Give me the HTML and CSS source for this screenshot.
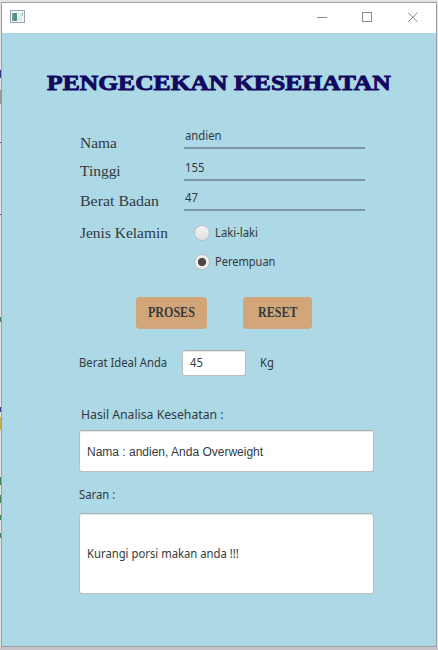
FILE: index.html
```html
<!DOCTYPE html>
<html lang="id">
<head>
<meta charset="utf-8">
<title>Pengecekan Kesehatan</title>
<link rel="stylesheet" href="styles.css">
</head>
<body>
<div class="backdrop">
  <i class="mark navy m1"></i><i class="mark gray m2"></i><i class="mark navy m3"></i><i class="mark navy m4"></i><i class="mark green m5"></i><i class="mark navy m6"></i><i class="mark gold m7"></i><i class="mark green m8"></i><i class="mark green m9"></i><i class="mark green m10"></i><i class="mark green m11"></i>
</div>
<div class="window">
  <header class="titlebar">
    <svg class="app-icon" width="15" height="13" viewBox="0 0 15 13">
      <rect x=".5" y=".5" width="14" height="12" fill="#f4f8f8" stroke="#9aa5ab"/>
      <rect x="2" y="3" width="5" height="8" fill="#4f9185"/>
      <rect x="2" y="3" width="2" height="8" fill="#6f96a5"/>
      <rect x="8" y="3" width="4" height="8" fill="#dfe9e9"/>
      <path d="M12.500 2v4" stroke="#9bb2ae"/>
    </svg>
    <svg class="controls" width="101" height="11" viewBox="0 0 101 11" fill="none" stroke="#8a8a8a">
      <path d="M0 5.500h10"/>
      <rect x="45.500" y=".5" width="9" height="9"/>
      <path d="M91 .5l9.500 9.500M100.500 .5L91 10"/>
    </svg>
  </header>
  <main class="client">
    <h1 class="title"><span>PENGECEKAN KESEHATAN</span></h1>
    <section class="form">
      <div class="row"><label class="name n1">Nama</label><div class="line-input"><span>andien</span></div></div>
      <div class="row r2"><label class="name n2">Tinggi</label><div class="line-input"><span>155</span></div></div>
      <div class="row r3"><label class="name n3">Berat Badan</label><div class="line-input"><span>47</span></div></div>
      <div class="row r4"><label class="name n4">Jenis Kelamin</label>
        <div class="options">
          <div class="option"><i class="radio"></i><span>Laki-laki</span></div>
          <div class="option"><i class="radio checked"></i><span class="t-per">Perempuan</span></div>
        </div>
      </div>
    </section>
    <div class="actions"><div class="btn proses"><span>PROSES</span></div><div class="btn reset"><span>RESET</span></div></div>
    <div class="ideal"><span class="t-ideal">Berat Ideal Anda</span><div class="field small"><span>45</span></div><span>Kg</span></div>
    <div class="caption hasil"><span>Hasil Analisa Kesehatan :</span></div>
    <div class="field result"><span>Nama : andien, Anda Overweight</span></div>
    <div class="caption saran"><span>Saran :</span></div>
    <div class="field advice"><span>Kurangi porsi makan anda !!!</span></div>
  </main>
</div>
</body>
</html>
```
FILE: styles.css
```css
* { box-sizing: border-box; }
body {
  margin: 0;
  width: 438px;
  height: 650px;
  overflow: hidden;
  background: #e4e4e6;
  border-bottom: 3px solid #c9c2c8;
  padding: 2px 1px 0;
  font: 12px/20px "Noto Sans", sans-serif;
  color: #333a3e;
}
.backdrop { position: absolute; inset: 0; }
.mark { position: absolute; left: 0; width: 2px; height: 8px; }
.navy { background: #39397c; }
.gray { background: #999; }
.green { background: #4b8252; }
.gold { background: #d3aa50; }
.m1 { top: 70px; }
.m2 { top: 90px; height: 14px; }
.m3 { top: 142px; height: 1px; }
.m4 { top: 214px; height: 1px; }
.m5 { top: 317px; height: 5px; }
.m6 { top: 407px; height: 5px; }
.m7 { top: 417px; height: 13px; }
.m8 { top: 477px; }
.m9 { top: 495px; }
.m10 { top: 515px; height: 5px; }
.m11 { top: 533px; height: 5px; }
.window {
  position: relative;
  width: 436px;
  height: 645px;
  border: 1px solid #9b9ea0;
  background: #add8e6;
}
.titlebar {
  display: flex;
  justify-content: space-between;
  height: 30px;
  padding: 7px 18px 0 8px;
  background: #fff;
}
.app-icon { display: block; }
.controls { display: block; margin-top: 2px; }
.client { padding-left: 77px; }
.title {
  margin: 38px 0 0 -32px;
  height: 24px;
  font: bold 22px/24px "Liberation Serif", serif;
  color: #12085f;
  white-space: nowrap;
  -webkit-text-stroke: .9px #12085f;
}
.title span, .name, .line-input span, .btn span, .options span, .ideal span, .caption span, .field span {
  display: inline-block;
  white-space: nowrap;
  transform: scaleX(.94);
  transform-origin: 0 50%;
}
.title span { transform: scaleX(1.163); }
.form { padding-top: 34px; }
.row { display: grid; grid-template-columns: 105px 181px; height: 20px; }
.r2 { margin-top: 12px; }
.r3 { margin-top: 10px; }
.r4 { margin-top: 12px; height: 58px; }
.name {
  justify-self: start;
  align-self: start;
  margin-left: 1px;
  font: 15px/20px "Liberation Serif", serif;
  transform: scaleX(1.03);
}
.n1 { margin-top: 4px; }
.n3 { transform: scaleX(1.06); }
.line-input {
  height: 20px;
  padding-left: 1px;
  border-bottom: 2px solid #7a98a2;
  line-height: 14px;
}
.options { padding-left: 10px; }
.option { display: flex; align-items: center; gap: 5px; height: 20px; margin-bottom: 9px; }
.radio {
  width: 16px;
  height: 16px;
  border: 1px solid #b7bfc2;
  border-radius: 50%;
  background: linear-gradient(#f4f4f4, #e0e0e0);
}
.checked { background: radial-gradient(circle, #4c4846 0 3.700px, #f0edef 4.500px); }
.options .t-per { transform: scaleX(.92); }
.actions { display: flex; gap: 36px; margin-top: 16px; padding-left: 57px; }
.btn {
  width: 71px;
  height: 32px;
  padding-left: 12px;
  border-radius: 4px;
  background: #d2a679;
  font: bold 14px/32px "Liberation Serif", serif;
}
.btn span { transform: scaleX(.86); }
.reset { width: 69px; padding-left: 15px; }
.ideal { display: flex; align-items: center; height: 26px; margin-top: 21px; }
.t-ideal { width: 103px; }
.field {
  display: flex;
  align-items: center;
  border: 1px solid #bcbfc1;
  border-top-color: #abb1b4;
  border-radius: 3px;
  background: #fff;
  box-shadow: inset 0 1px 1px #e6e8e9;
  padding-left: 7px;
}
.small { width: 64px; height: 26px; margin-right: 14px; }
.caption { height: 20px; }
.hasil { margin: 28px 0 0 2px; font-size: 13px; }
.result { width: 295px; height: 42px; margin-top: 6px; padding-top: 1px; font-family: "Liberation Sans", sans-serif; }
.result span { transform: none; }
.saran { margin-top: 13px; }
.advice { width: 295px; height: 81px; margin-top: 8px; }
```
